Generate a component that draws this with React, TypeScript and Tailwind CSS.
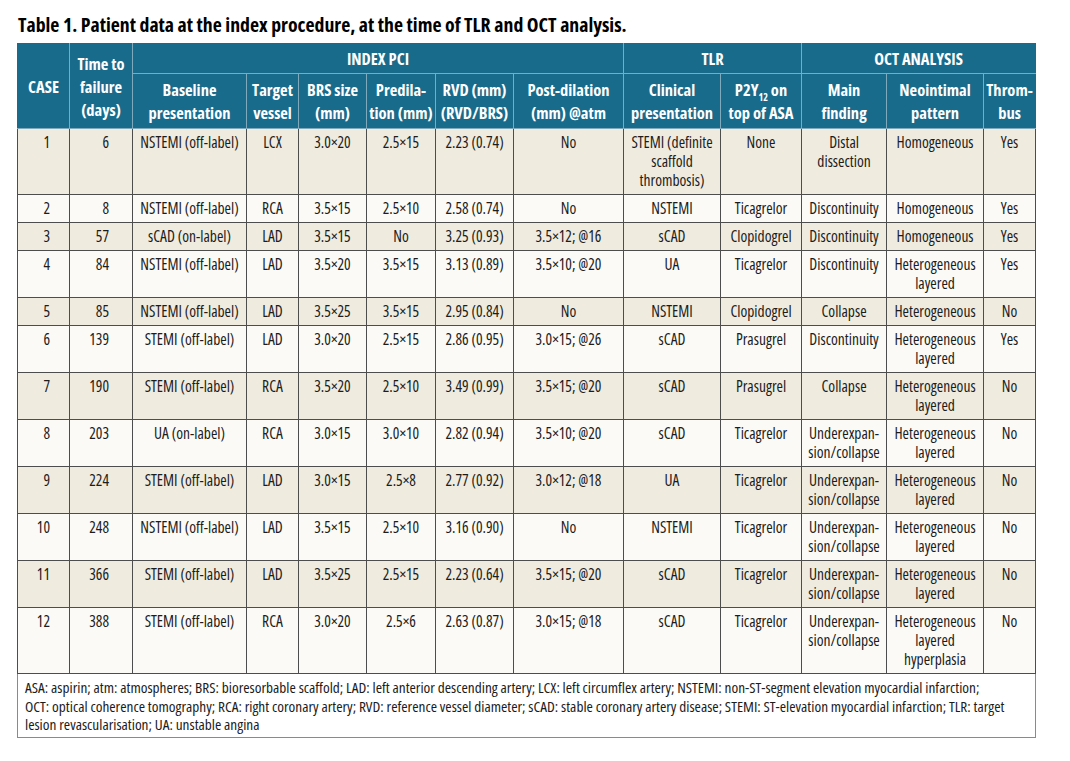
import React from "react";

type Row = {
  c: string;
  t: string;
  base: string;
  ves: string;
  brs: string;
  pre: string;
  rvd: string;
  post: string;
  clin: React.ReactNode;
  p2y: string;
  main: React.ReactNode;
  neo: React.ReactNode;
  thr: string;
};

const rows: Row[] = [
  { c: "1", t: "6", base: "NSTEMI (off-label)", ves: "LCX", brs: "3.0×20", pre: "2.5×15", rvd: "2.23 (0.74)", post: "No", clin: <>STEMI (definite<br />scaffold<br />thrombosis)</>, p2y: "None", main: <>Distal<br />dissection</>, neo: "Homogeneous", thr: "Yes" },
  { c: "2", t: "8", base: "NSTEMI (off-label)", ves: "RCA", brs: "3.5×15", pre: "2.5×10", rvd: "2.58 (0.74)", post: "No", clin: "NSTEMI", p2y: "Ticagrelor", main: "Discontinuity", neo: "Homogeneous", thr: "Yes" },
  { c: "3", t: "57", base: "sCAD (on-label)", ves: "LAD", brs: "3.5×15", pre: "No", rvd: "3.25 (0.93)", post: "3.5×12; @16", clin: "sCAD", p2y: "Clopidogrel", main: "Discontinuity", neo: "Homogeneous", thr: "Yes" },
  { c: "4", t: "84", base: "NSTEMI (off-label)", ves: "LAD", brs: "3.5×20", pre: "3.5×15", rvd: "3.13 (0.89)", post: "3.5×10; @20", clin: "UA", p2y: "Ticagrelor", main: "Discontinuity", neo: <>Heterogeneous<br />layered</>, thr: "Yes" },
  { c: "5", t: "85", base: "NSTEMI (off-label)", ves: "LAD", brs: "3.5×25", pre: "3.5×15", rvd: "2.95 (0.84)", post: "No", clin: "NSTEMI", p2y: "Clopidogrel", main: "Collapse", neo: "Heterogeneous", thr: "No" },
  { c: "6", t: "139", base: "STEMI (off-label)", ves: "LAD", brs: "3.0×20", pre: "2.5×15", rvd: "2.86 (0.95)", post: "3.0×15; @26", clin: "sCAD", p2y: "Prasugrel", main: "Discontinuity", neo: <>Heterogeneous<br />layered</>, thr: "Yes" },
  { c: "7", t: "190", base: "STEMI (off-label)", ves: "RCA", brs: "3.5×20", pre: "2.5×10", rvd: "3.49 (0.99)", post: "3.5×15; @20", clin: "sCAD", p2y: "Prasugrel", main: "Collapse", neo: <>Heterogeneous<br />layered</>, thr: "No" },
  { c: "8", t: "203", base: "UA (on-label)", ves: "RCA", brs: "3.0×15", pre: "3.0×10", rvd: "2.82 (0.94)", post: "3.5×10; @20", clin: "sCAD", p2y: "Ticagrelor", main: <>Underexpan-<br />sion/collapse</>, neo: <>Heterogeneous<br />layered</>, thr: "No" },
  { c: "9", t: "224", base: "STEMI (off-label)", ves: "LAD", brs: "3.0×15", pre: "2.5×8", rvd: "2.77 (0.92)", post: "3.0×12; @18", clin: "UA", p2y: "Ticagrelor", main: <>Underexpan-<br />sion/collapse</>, neo: <>Heterogeneous<br />layered</>, thr: "No" },
  { c: "10", t: "248", base: "NSTEMI (off-label)", ves: "LAD", brs: "3.5×15", pre: "2.5×10", rvd: "3.16 (0.90)", post: "No", clin: "NSTEMI", p2y: "Ticagrelor", main: <>Underexpan-<br />sion/collapse</>, neo: <>Heterogeneous<br />layered</>, thr: "No" },
  { c: "11", t: "366", base: "STEMI (off-label)", ves: "LAD", brs: "3.5×25", pre: "2.5×15", rvd: "2.23 (0.64)", post: "3.5×15; @20", clin: "sCAD", p2y: "Ticagrelor", main: <>Underexpan-<br />sion/collapse</>, neo: <>Heterogeneous<br />layered</>, thr: "No" },
  { c: "12", t: "388", base: "STEMI (off-label)", ves: "RCA", brs: "3.0×20", pre: "2.5×6", rvd: "2.63 (0.87)", post: "3.0×15; @18", clin: "sCAD", p2y: "Ticagrelor", main: <>Underexpan-<br />sion/collapse</>, neo: <>Heterogeneous<br />layered<br />hyperplasia</>, thr: "No" },
];

const th = "border border-[#7fa9bd] px-0 font-bold align-middle text-center whitespace-nowrap";
const td = "border border-[#4d4d4d] px-[2px] py-[4px] align-top text-center whitespace-nowrap";

export default function App() {
  return (
    <div className="bg-white w-[1070px] h-[761px] pl-[17px] pt-[13px] text-[#1c1c1c] font-['Open_Sans',sans-serif] [font-stretch:75%]">
      <div className="text-[19.8px] leading-[24px] font-bold pl-[1px] mb-[6px] text-black">
        Table 1. Patient data at the index procedure, at the time of TLR and OCT analysis.
      </div>
      <table className="w-[1018px] table-fixed border-collapse text-[15.5px] leading-[19px]">
        <colgroup>
          <col className="w-[52px]" />
          <col className="w-[63px]" />
          <col className="w-[114px]" />
          <col className="w-[52px]" />
          <col className="w-[68px]" />
          <col className="w-[69px]" />
          <col className="w-[78px]" />
          <col className="w-[110px]" />
          <col className="w-[97px]" />
          <col className="w-[81px]" />
          <col className="w-[85px]" />
          <col className="w-[97px]" />
          <col className="w-[52px]" />
        </colgroup>
        <thead className="bg-[#186b8b] text-white text-[16.5px] leading-[23px]">
          <tr>
            <th rowSpan={2} className={th + " border-t-[#186b8b] border-l-[#186b8b]"}>CASE</th>
            <th rowSpan={2} className={th + " border-t-[#186b8b]"}>Time to<br />failure<br />(days)</th>
            <th colSpan={6} className={th + " py-[3px] border-t-[#186b8b]"}>INDEX PCI</th>
            <th colSpan={2} className={th + " py-[3px] border-t-[#186b8b]"}>TLR</th>
            <th colSpan={3} className={th + " py-[3px] border-t-[#186b8b] border-r-[#186b8b]"}>OCT ANALYSIS</th>
          </tr>
          <tr>
            <th className={th + " py-[4px]"}>Baseline<br />presentation</th>
            <th className={th + " py-[4px]"}>Target<br />vessel</th>
            <th className={th + " py-[4px]"}>BRS size<br />(mm)</th>
            <th className={th + " py-[4px]"}>Predila-<br />tion (mm)</th>
            <th className={th + " py-[4px]"}>RVD (mm)<br />(RVD/BRS)</th>
            <th className={th + " py-[4px]"}>Post-dilation<br />(mm) @atm</th>
            <th className={th + " py-[4px]"}>Clinical<br />presentation</th>
            <th className={th + " py-[4px]"}>
              P2Y<sub className="text-[10px] relative top-[5px] align-baseline">12</sub> on<br />top of ASA
            </th>
            <th className={th + " py-[4px]"}>Main<br />finding</th>
            <th className={th + " py-[4px]"}>Neointimal<br />pattern</th>
            <th className={th + " py-[4px] border-r-[#186b8b]"}>Throm-<br />bus</th>
          </tr>
        </thead>
        <tbody>
          {rows.map((r, i) => (
            <tr key={r.c} className={i % 2 === 0 ? "bg-[#efebdf]" : "bg-[#fbfaf6]"}>
              <td className={td + " text-right pr-[19px]"}>{r.c}</td>
              <td className={td + " text-right pr-[23px]"}>{r.t}</td>
              <td className={td}>{r.base}</td>
              <td className={td}>{r.ves}</td>
              <td className={td}>{r.brs}</td>
              <td className={td}>{r.pre}</td>
              <td className={td}>{r.rvd}</td>
              <td className={td}>{r.post}</td>
              <td className={td}>{r.clin}</td>
              <td className={td}>{r.p2y}</td>
              <td className={td}>{r.main}</td>
              <td className={td}>{r.neo}</td>
              <td className={td}>{r.thr}</td>
            </tr>
          ))}
          <tr className="bg-white">
            <td colSpan={13} className="border border-[#8a8a8a] px-[7px] pt-[4px] pb-[3px] text-left text-[15.3px] leading-[18.5px] whitespace-nowrap">
              ASA: aspirin; atm: atmospheres; BRS: bioresorbable scaffold; LAD: left anterior descending artery; LCX: left circumflex artery; NSTEMI: non-ST-segment elevation myocardial infarction;
              <br />
              OCT: optical coherence tomography; RCA: right coronary artery; RVD: reference vessel diameter; sCAD: stable coronary artery disease; STEMI: ST-elevation myocardial infarction; TLR: target
              <br />
              lesion revascularisation; UA: unstable angina
            </td>
          </tr>
        </tbody>
      </table>
    </div>
  );
}
